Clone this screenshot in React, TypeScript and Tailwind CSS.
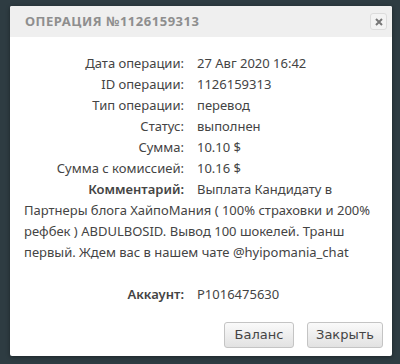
const rows = [
  { label: "Дата операции:", value: "27 Авг 2020 16:42" },
  { label: "ID операции:", value: "1126159313" },
  { label: "Тип операции:", value: "перевод" },
  { label: "Статус:", value: "выполнен" },
  { label: "Сумма:", value: "10.10 $" },
  { label: "Сумма с комиссией:", value: "10.16 $" },
];

export default function App() {
  return (
    <div className="min-h-[364px] bg-[#2e3c42] pl-[10px] pt-[6px] font-['Noto_Sans',sans-serif]">
      <div className="flex h-[350px] w-[382px] flex-col rounded-[2px] bg-white shadow-[0_1px_4px_rgba(0,0,0,0.4)]">
        <div className="flex h-[31px] items-center justify-between rounded-t-[2px] bg-[#efefef] pl-[15px] pr-[5px]">
          <h1 className="text-[13px] font-bold tracking-[0.04em] text-[#8e8e8e]">ОПЕРАЦИЯ №1126159313</h1>
          <button className="flex h-[17px] w-[17px] items-center justify-center rounded-[3px] border border-[#dcdcdc] bg-[#f3f3f3]">
            <svg width="8" height="8" viewBox="0 0 8 8">
              <path d="M1 1L7 7M7 1L1 7" stroke="#777" strokeWidth="2" />
            </svg>
          </button>
        </div>

        <div className="flex-1 px-[14px] pt-[16px] text-[13px] leading-[21px] text-[#444]">
          {rows.map((r) => (
            <div key={r.label} className="flex">
              <span className="w-[160px] shrink-0 text-right">{r.label}</span>
              <span className="ml-[13px]">{r.value}</span>
            </div>
          ))}
          <p>
            <span className="mr-[13px] inline-block w-[160px] text-right font-semibold">Комментарий:</span>
            Выплата Кандидату в Партнеры блога ХайпоМания ( 100% страховки и 200% рефбек ) ABDULBOSID. Вывод 100 шокелей. Транш первый. Ждем вас в нашем чате @hyipomania_chat
          </p>
          <div className="mt-[21px] flex">
            <span className="w-[160px] shrink-0 text-right font-semibold">Аккаунт:</span>
            <span className="ml-[13px]">P1016475630</span>
          </div>
        </div>

        <div className="flex justify-end gap-[13px] pb-[8px] pr-[9px] font-['DejaVu_Sans',sans-serif] text-[13px] text-[#444]">
          <button className="h-[26px] w-[70px] rounded-[3px] border border-[#c4c4c4] bg-gradient-to-b from-[#fafafa] to-[#e2e2e2]">Баланс</button>
          <button className="h-[26px] w-[76px] rounded-[3px] border border-[#c4c4c4] bg-gradient-to-b from-[#fafafa] to-[#e2e2e2]">Закрыть</button>
        </div>
      </div>
    </div>
  );
}
